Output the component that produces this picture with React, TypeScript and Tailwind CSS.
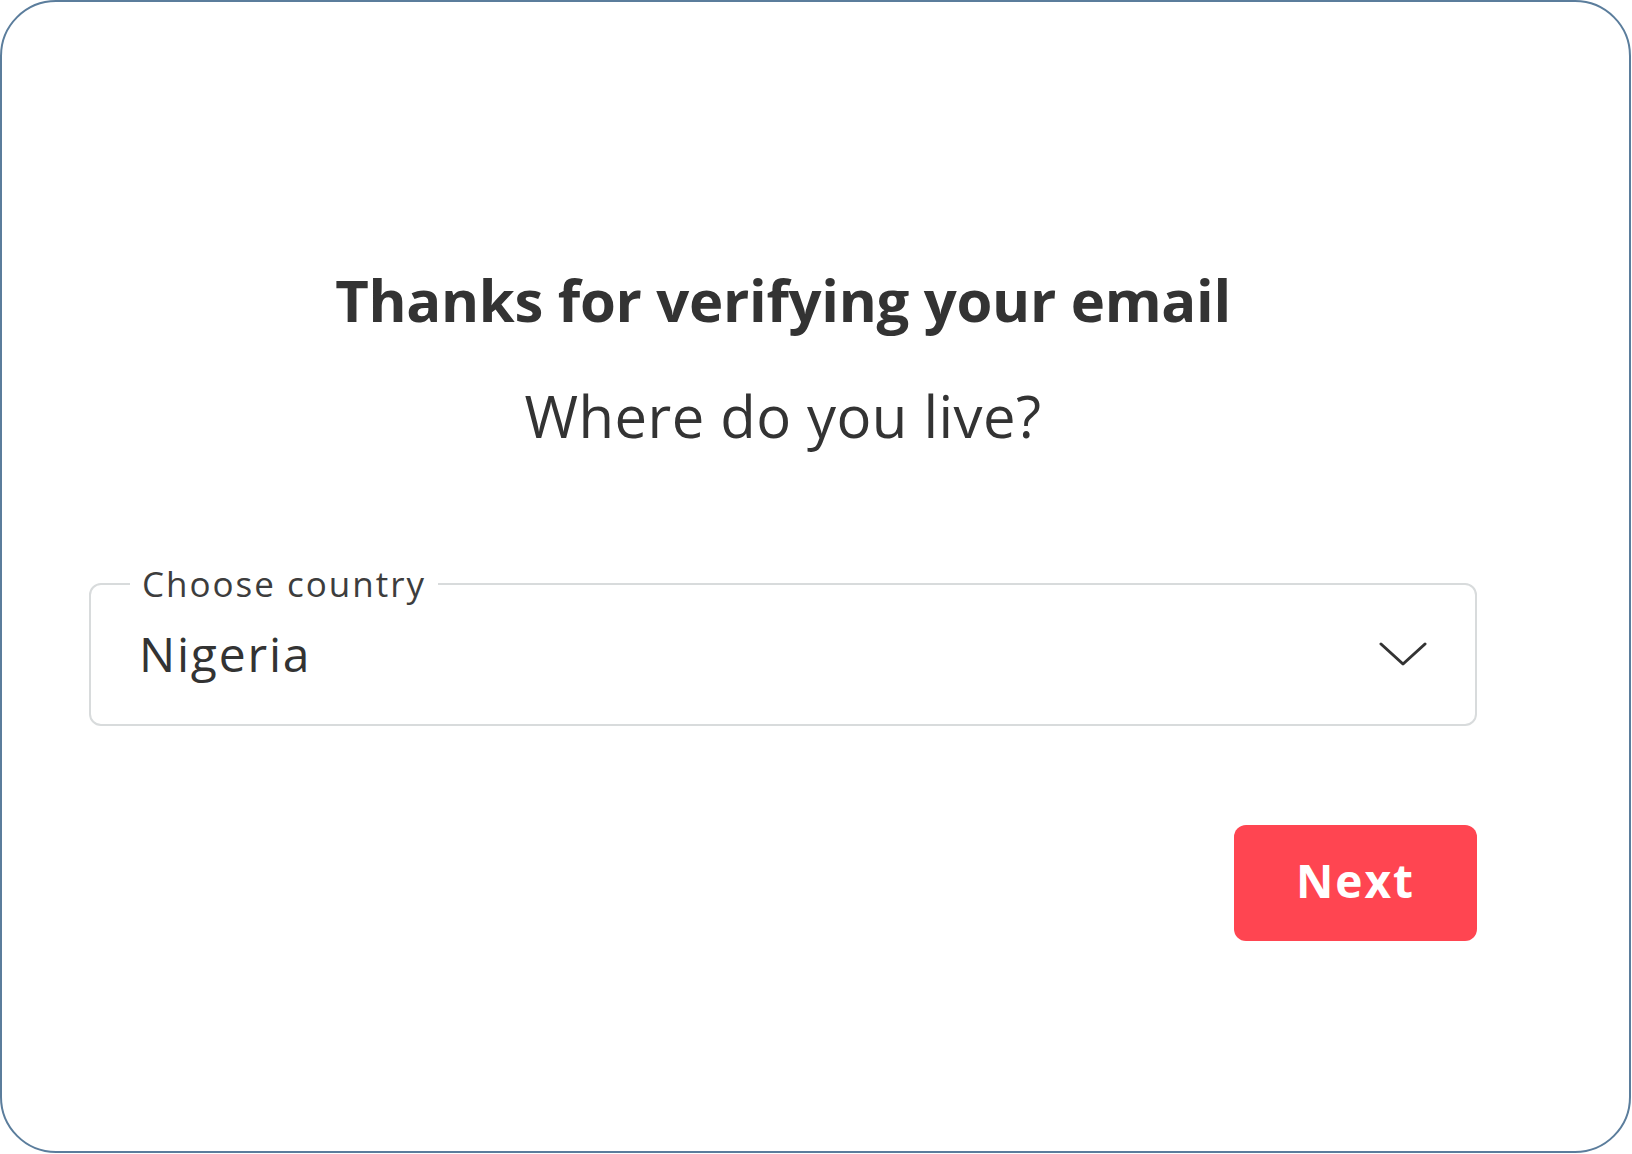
export default function App() {
  return (
    <div className="w-[1632px] h-[1154px] bg-white">
      <div
        className="w-[1631px] h-[1153px] border-2 border-[#5b7d9c] rounded-[56px] bg-white text-[#333333]"
        style={{ fontFamily: "'Open Sans', 'Noto Sans', sans-serif" }}
      >
        <div className="w-[1388px] ml-[87px] pt-[269px] flex flex-col">
          {/* Headline */}
          <h1 className="text-center text-[58px] leading-[58px] font-bold tracking-[-0.3px]">
            Thanks for verifying your email
          </h1>
          <p className="text-center text-[58px] leading-[58px] font-normal mt-[58px] tracking-[0.45px]">
            Where do you live?
          </p>

          {/* Country select */}
          <fieldset className="mt-[121px] h-[160px] border-[2.5px] border-[#d8dbdc] rounded-[12px] px-0">
            <legend className="ml-[39px] px-[12px] text-[35px] leading-[36px] text-[#3d3d3d] tracking-[2px]">
              Choose country
            </legend>
            <div className="flex items-center justify-between pl-[48px] pr-[48px] mt-[22px]">
              <span className="text-[48px] leading-[60px] text-[#333333] tracking-[1.8px]">Nigeria</span>
              <svg width="48" height="24" viewBox="0 0 48 24" fill="none" className="text-[#333333]">
                <polyline points="2,2 24,22 46,2" stroke="currentColor" strokeWidth="3" strokeLinecap="round" strokeLinejoin="round" />
              </svg>
            </div>
          </fieldset>

          {/* Action */}
          <div className="flex justify-end mt-[99px]">
            <button
              className="w-[243px] h-[116px] rounded-[12px] bg-[#ff4551] text-white text-[46px] font-bold tracking-[2px] pb-[5px]"
            >
              Next
            </button>
          </div>
        </div>
      </div>
    </div>
  );
}
